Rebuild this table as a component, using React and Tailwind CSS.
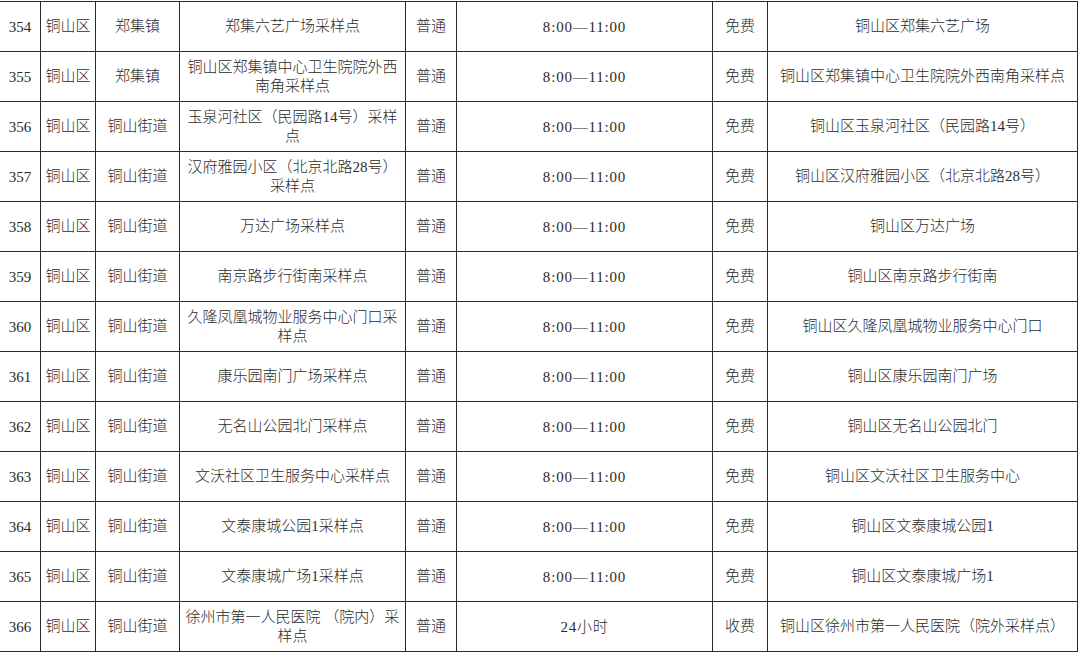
const rows = [
  { no: '354', district: '铜山区', town: '郑集镇', site: ['郑集六艺广场采样点'], type: '普通', time: '8:00—11:00', fee: '免费', addr: '铜山区郑集六艺广场' },
  { no: '355', district: '铜山区', town: '郑集镇', site: ['铜山区郑集镇中心卫生院院外西', '南角采样点'], type: '普通', time: '8:00—11:00', fee: '免费', addr: '铜山区郑集镇中心卫生院院外西南角采样点' },
  { no: '356', district: '铜山区', town: '铜山街道', site: ['玉泉河社区（民园路14号）采样', '点'], type: '普通', time: '8:00—11:00', fee: '免费', addr: '铜山区玉泉河社区（民园路14号）' },
  { no: '357', district: '铜山区', town: '铜山街道', site: ['汉府雅园小区（北京北路28号）', '采样点'], type: '普通', time: '8:00—11:00', fee: '免费', addr: '铜山区汉府雅园小区（北京北路28号）' },
  { no: '358', district: '铜山区', town: '铜山街道', site: ['万达广场采样点'], type: '普通', time: '8:00—11:00', fee: '免费', addr: '铜山区万达广场' },
  { no: '359', district: '铜山区', town: '铜山街道', site: ['南京路步行街南采样点'], type: '普通', time: '8:00—11:00', fee: '免费', addr: '铜山区南京路步行街南' },
  { no: '360', district: '铜山区', town: '铜山街道', site: ['久隆凤凰城物业服务中心门口采', '样点'], type: '普通', time: '8:00—11:00', fee: '免费', addr: '铜山区久隆凤凰城物业服务中心门口' },
  { no: '361', district: '铜山区', town: '铜山街道', site: ['康乐园南门广场采样点'], type: '普通', time: '8:00—11:00', fee: '免费', addr: '铜山区康乐园南门广场' },
  { no: '362', district: '铜山区', town: '铜山街道', site: ['无名山公园北门采样点'], type: '普通', time: '8:00—11:00', fee: '免费', addr: '铜山区无名山公园北门' },
  { no: '363', district: '铜山区', town: '铜山街道', site: ['文沃社区卫生服务中心采样点'], type: '普通', time: '8:00—11:00', fee: '免费', addr: '铜山区文沃社区卫生服务中心' },
  { no: '364', district: '铜山区', town: '铜山街道', site: ['文泰康城公园1采样点'], type: '普通', time: '8:00—11:00', fee: '免费', addr: '铜山区文泰康城公园1' },
  { no: '365', district: '铜山区', town: '铜山街道', site: ['文泰康城广场1采样点'], type: '普通', time: '8:00—11:00', fee: '免费', addr: '铜山区文泰康城广场1' },
  { no: '366', district: '铜山区', town: '铜山街道', site: ['徐州市第一人民医院 （院内）采', '样点'], type: '普通', time: '24小时', fee: '收费', addr: '铜山区徐州市第一人民医院（院外采样点）' },
];

const cell = 'flex items-center justify-center text-center border-r border-[#2a2a2a]';

export default function App() {
  return (
    <div
      className="w-[1080px] h-[654px] overflow-hidden bg-white text-[#2b2b2b] text-[15px] leading-[19px] font-light"
      style={{ fontFamily: '"Liberation Serif", "Noto Sans CJK SC", serif' }}
    >
      <div className="mt-[1px] w-[1078px] border-t border-[#2a2a2a]">
        {rows.map((row) => (
          <div
            key={row.no}
            className="grid h-[50px] grid-cols-[41px_55px_84px_226px_51px_256px_55px_310px] border-b border-[#2a2a2a]"
          >
            <div className={`${cell} pt-[2px]`}>{row.no}</div>
            <div className={cell}>{row.district}</div>
            <div className={cell}>{row.town}</div>
            <div className={`${cell} flex-col`}>
              {row.site.map((line, i) => (
                <span key={i} className="whitespace-nowrap">{line}</span>
              ))}
            </div>
            <div className={cell}>{row.type}</div>
            <div className={`${cell} pt-[2px] tracking-[0.8px]`}>{row.time}</div>
            <div className={cell}>{row.fee}</div>
            <div className={`${cell} whitespace-nowrap`}>{row.addr}</div>
          </div>
        ))}
      </div>
    </div>
  );
}
